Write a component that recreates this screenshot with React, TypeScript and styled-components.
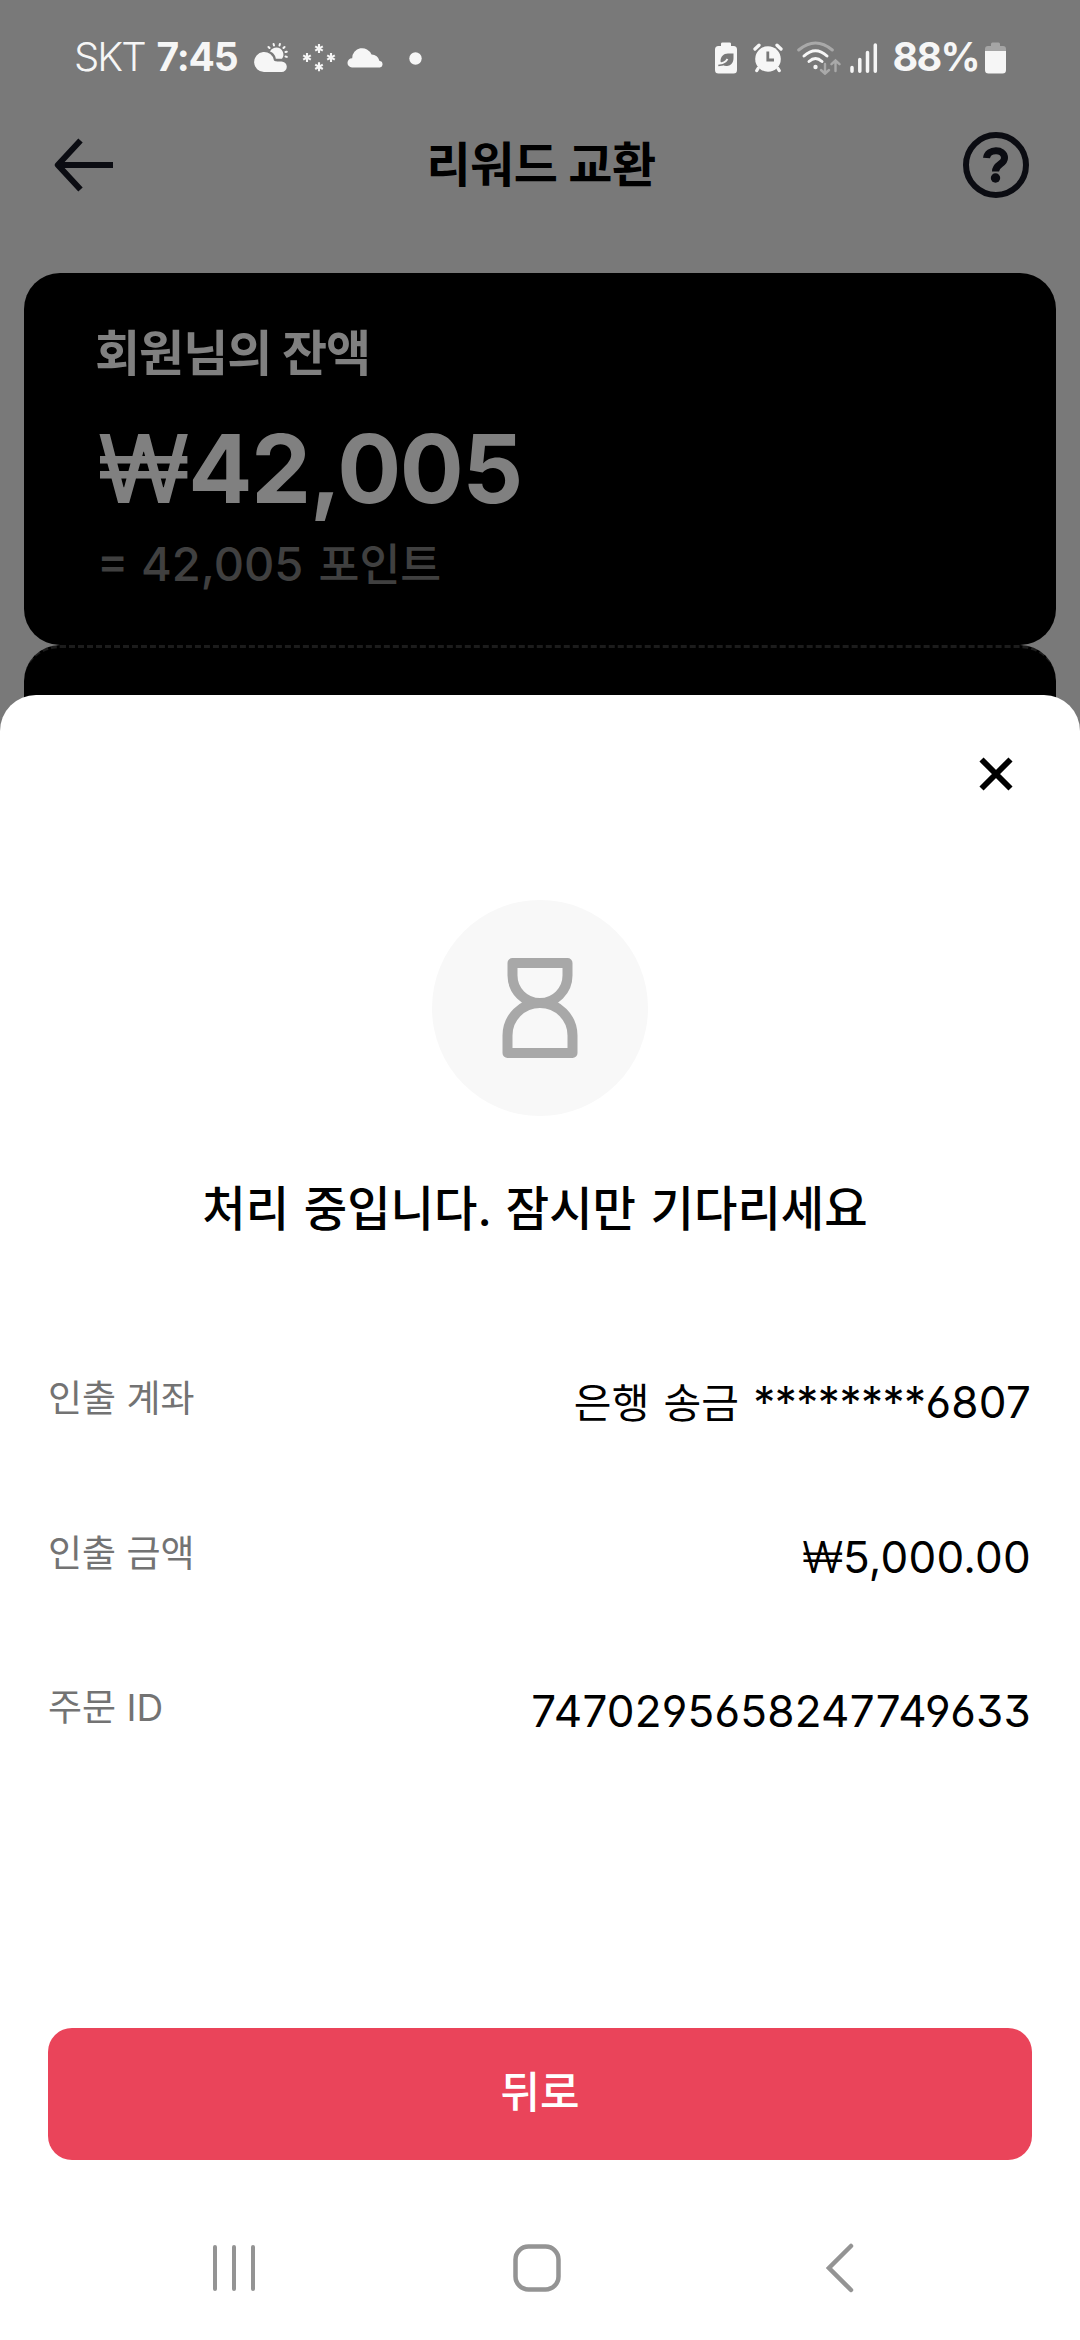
import React from "react";
import styled, { createGlobalStyle } from "styled-components";

const GlobalStyle = createGlobalStyle`
  * { box-sizing: border-box; }
  html, body { margin: 0; padding: 0; background: #797979; }
  body { width: 1080px; height: 2340px; overflow: hidden; font-family: Inter, "Noto Sans CJK KR", sans-serif; }
`;

const Screen = styled.div`
  width: 1080px;
  height: 2340px;
  display: flex;
  flex-direction: column;
  background: #797979;
  overflow: hidden;
`;

const StatusBar = styled.div`
  height: 116px;
  display: flex;
  align-items: center;
  justify-content: space-between;
  padding: 0 74px 0 74px;
  color: #f6f6f6;
`;

const StatusGroup = styled.div`
  display: flex;
  align-items: center;
`;

const StatusText = styled.span<{ $weight: number; $size: number; $gap: number; $spacing: number }>`
  font-size: ${(p) => p.$size}px;
  font-weight: ${(p) => p.$weight};
  letter-spacing: ${(p) => p.$spacing}px;
  margin-right: ${(p) => p.$gap}px;
  line-height: 56px;
  padding-bottom: 2px;
  white-space: nowrap;
`;

const Header = styled.header`
  height: 157px;
  padding: 0 51px 59px 54px;
  display: flex;
  align-items: center;
  justify-content: space-between;
`;

const HeaderTitle = styled.h1`
  margin: 0;
  padding-left: 5px;
  font-size: 48px;
  font-weight: 700;
  line-height: 70px;
  letter-spacing: -0.5px;
  color: #000;
`;

const IconButton = styled.button`
  border: 0;
  padding: 0;
  background: none;
  display: flex;
`;

const Wallet = styled.section`
  height: 422px;
  padding: 0 24px;
  display: flex;
  flex-direction: column;
`;

const BalanceCard = styled.div`
  flex: 0 0 372px;
  padding: 45px 71px 0;
  background: #000;
  border-radius: 36px;
`;

const CardLabel = styled.div`
  font-size: 49px;
  font-weight: 700;
  line-height: 72px;
  letter-spacing: -1px;
  color: #808080;
`;

const Balance = styled.div`
  font-size: 95px;
  font-weight: 650;
  line-height: 120px;
  margin-top: 19px;
  padding-left: 2px;
  letter-spacing: -1.4px;
  color: #808080;
`;

const BalanceWon = styled.span`
  font-weight: 550;
  letter-spacing: -2px;
`;

const Points = styled.div`
  display: flex;
  align-items: baseline;
  gap: 15px;
  padding-left: 2px;
  font-size: 47px;
  font-weight: 500;
  line-height: 70px;
  color: #404040;
`;

const PointsUnit = styled.span`
  font-size: 44.5px;
`;

const NextCard = styled.div`
  flex: 1 0 100px;
  background: #000;
  border-top: 3px dashed #1c1c1c;
  border-radius: 36px 36px 0 0;
`;

const Sheet = styled.main`
  flex: 1;
  display: flex;
  flex-direction: column;
  background: #fff;
  border-radius: 36px 36px 0 0;
`;

const SheetTop = styled.div`
  height: 205px;
  padding: 61px 66px 0;
  display: flex;
  justify-content: flex-end;
  align-items: flex-start;
`;

const StatusBadge = styled.div`
  width: 216px;
  height: 216px;
  align-self: center;
  border-radius: 50%;
  background: #f8f8f8;
  display: flex;
  align-items: center;
  justify-content: center;
`;

const Message = styled.h2`
  margin: 57px 0 0;
  padding-right: 10px;
  text-align: center;
  font-size: 47.2px;
  font-weight: 500;
  line-height: 72px;
  word-spacing: 2px;
  color: #000;
`;

const Details = styled.dl`
  margin: 127px 48px 0;
  display: flex;
  flex-direction: column;
  gap: 94.5px;
`;

const DetailRow = styled.div`
  height: 60px;
  display: flex;
  justify-content: space-between;
  align-items: flex-start;
`;

const Term = styled.dt`
  font-size: 37px;
  line-height: 50px;
  padding-top: 2px;
  color: #737373;
`;

const Value = styled.dd`
  margin: 0 1px 0 0;
  display: flex;
  align-items: baseline;
  font-size: 44px;
  line-height: 60px;
  letter-spacing: 0.2px;
  font-feature-settings: "cv03", "cv04", "cv09";
  color: #000;
`;

const BankName = styled.span`
  font-size: 41px;
  word-spacing: 2px;
  margin-right: 14px;
`;

const Mask = styled.span`
  letter-spacing: -0.5px;
`;

const Won = styled.span`
  font-weight: 300;
  letter-spacing: 0;
`;

const BackButton = styled.button`
  margin: auto 48px 0;
  height: 132px;
  padding: 0 0 4px;
  border: 0;
  border-radius: 24px;
  background: #ea445a;
  color: #fff;
  font: 500 43px/128px Inter, "Noto Sans CJK KR", sans-serif;
`;

const NavBar = styled.nav`
  height: 180px;
  padding: 35px 226px 0 210px;
  display: flex;
  justify-content: space-between;
  align-items: center;
`;

const HomeSlot = styled.span`
  display: flex;
  padding-right: 11px;
`;

const CloudSun = () => (
  <svg width="34" height="32" viewBox="0 0 34 32">
    <g stroke="#f6f6f6" strokeWidth="2" strokeLinecap="round">
      <path d="M15.500 6l-1-1M20 3.500l-.4-1.500M25.500 3.500l.4-1.500M29.500 6l1-1M31.500 10l1.300-.3M31.500 14.500l1.300.4" />
    </g>
    <path d="M16 9.500C17.500 6.500 20 5.500 22.500 5.500a7 7 0 0 1 5.500 11.200H21.800C21.500 13.500 19 10.500 16 9.500z" fill="#f6f6f6" />
    <path d="M10 30A10 10 0 1 1 20 18.500C21 19.300 22 19.400 23 19.400H27.500A5.300 5.300 0 0 1 27.500 30z" fill="#f6f6f6" />
  </svg>
);

const snowflakes = [[17, 5.5], [5, 14.5], [29, 14.5], [17, 23.8]];

const Snow = () => (
  <svg width="34" height="30" viewBox="0 0 34 30">
    {snowflakes.map(([x, y]) => (
      <path key={`${x}-${y}`} transform={`translate(${x} ${y})`} d="M0-4.500V4.500M-3.800-2.200L3.800 2.200M-3.800 2.200L3.800-2.200" stroke="#f6f6f6" strokeWidth="2.100" />
    ))}
  </svg>
);

const Cloud = () => (
  <svg width="38" height="22" viewBox="0 0 38 22">
    <path d="M5 20.500A4.600 4.600 0 0 1 5.200 11.300 10 10 0 0 1 24.500 7.500A8 8 0 0 1 32.500 14A3.300 3.300 0 0 1 33 20.500z" fill="#f6f6f6" />
  </svg>
);

const Dot = () => (
  <svg width="13" height="13" viewBox="0 0 13 13"><circle cx="6.500" cy="6.500" r="6.200" fill="#f6f6f6" /></svg>
);

const BatterySaver = () => (
  <svg width="22" height="32" viewBox="0 0 22 32">
    <path d="M6 4V1.800Q6 .500 7.500.500H14.500Q16 .500 16 1.800V4H18.500Q22 4 22 7.500V28Q22 31.500 18.500 31.500H3.500Q0 31.500 0 28V7.500Q0 4 3.500 4z" fill="#f6f6f6" />
    <path d="M18.500 11.500H13C8.500 11.500 5.500 14.500 5.500 19.500L7.500 23C9.500 24 11.500 24.200 13 23.800C16.800 23 18.500 20 18.500 16z" fill="#797979" />
    <path d="M12.500 17C11 19.500 8.500 21.300 4 21.800" fill="none" stroke="#f6f6f6" strokeWidth="1.900" />
    <path d="M3.300 23.600L8 22.800" stroke="#797979" strokeWidth="1.500" />
  </svg>
);

const Alarm = () => (
  <svg width="30" height="30" viewBox="0 0 30 30">
    <circle cx="15" cy="16" r="12.800" fill="#f6f6f6" />
    <path d="M2 6L6 2.200M28 6L24 2.200M5 25.500L3.800 27.500M25 25.500L26.200 27.500" stroke="#f6f6f6" strokeWidth="3.300" strokeLinecap="round" />
    <path d="M14.800 8.500V17H21" fill="none" stroke="#797979" strokeWidth="2.800" />
  </svg>
);

const Wifi = () => (
  <svg width="44" height="34" viewBox="0 0 44 34">
    <g fill="none" strokeLinecap="round" strokeWidth="3">
      <path d="M1.700 9Q18.500-5 35.300 9" stroke="#a9a9a9" />
      <path d="M7 15Q18.500 4.500 30 15M12 20.500Q18.500 14.500 25 20.500" stroke="#f6f6f6" />
      <path d="M28 23V32.500M24 29L28 32.700L32 29M38.500 30V19.500M34.500 23.200L38.500 19.500L42.500 23.200" stroke="#a9a9a9" strokeWidth="2.400" />
    </g>
    <circle cx="18.500" cy="26" r="2.200" fill="#f6f6f6" />
  </svg>
);

const Signal = () => (
  <svg width="28" height="31" viewBox="0 0 28 31">
    <path d="M2 24.500V28.300M9.800 16.500V28.300M17.500 9.500V28.300M25.300 2V28.300" stroke="#f6f6f6" strokeWidth="3.500" strokeLinecap="round" />
  </svg>
);

const Battery = () => (
  <svg width="21" height="32" viewBox="0 0 21 32">
    <path d="M0 9V7Q0 4 3 4H6V2Q6 .500 7.500.500H13.500Q15 .500 15 2V4H18Q21 4 21 7V9z" fill="#a5a5a5" />
    <path d="M0 9H21V28Q21 31.500 17.500 31.500H3.500Q0 31.500 0 28z" fill="#f6f6f6" />
  </svg>
);

const Spacer = styled.span<{ $w: number }>`
  flex: 0 0 ${(p) => p.$w}px;
`;

export default function App() {
  return (
    <Screen>
      <GlobalStyle />
      <StatusBar>
        <StatusGroup>
          <StatusText $weight={300} $size={40} $gap={12} $spacing={-2}>SKT</StatusText>
          <StatusText $weight={700} $size={39} $gap={16} $spacing={-1.2}>7:45</StatusText>
          <CloudSun /><Spacer $w={14} /><Snow /><Spacer $w={11} /><Cloud /><Spacer $w={24} /><Dot />
        </StatusGroup>
        <StatusGroup>
          <BatterySaver /><Spacer $w={16} /><Alarm /><Spacer $w={14} /><Wifi /><Spacer $w={9} /><Signal /><Spacer $w={15} />
          <StatusText $weight={700} $size={39.5} $gap={6} $spacing={-1.7}>88%</StatusText>
          <Battery />
        </StatusGroup>
      </StatusBar>
      <Header>
        <IconButton aria-label="뒤로 가기">
          <svg width="60" height="54" viewBox="0 0 60 54" fill="none" stroke="#0b0c12" strokeWidth="6">
            <path d="M26.500 2.500L3.800 27L26.500 51.500M4 27H59" strokeLinejoin="round" />
          </svg>
        </IconButton>
        <HeaderTitle>리워드 교환</HeaderTitle>
        <IconButton aria-label="도움말">
          <svg width="66" height="68" viewBox="0 0 66 68" fill="none" stroke="#0b0c12">
            <circle cx="33" cy="34" r="30" strokeWidth="6" />
            <path d="M23.500 27C24.500 17.500 41.500 17 41.500 27C41.500 33.500 32.500 33 32.500 40.500" strokeWidth="7" />
            <circle cx="32.500" cy="47" r="4.700" fill="#0b0c12" stroke="none" />
          </svg>
        </IconButton>
      </Header>
      <Wallet>
        <BalanceCard>
          <CardLabel>회원님의 잔액</CardLabel>
          <Balance><BalanceWon>₩</BalanceWon>42,005</Balance>
          <Points>
            <span>= 42,005</span>
            <PointsUnit>포인트</PointsUnit>
          </Points>
        </BalanceCard>
        <NextCard />
      </Wallet>
      <Sheet>
        <SheetTop>
          <IconButton aria-label="닫기">
            <svg width="36" height="36" viewBox="0 0 36 36" fill="none" stroke="#000" strokeWidth="5.800">
              <path d="M3.500 3.500L32.500 32.500M32.500 3.500L3.500 32.500" />
            </svg>
          </IconButton>
        </SheetTop>
        <StatusBadge>
          <svg width="76" height="100" viewBox="0 0 76 100" fill="none" stroke="#a8a8a8" strokeWidth="10" strokeLinejoin="round">
            <path d="M10.500 5H65.500V17.500A27.500 27.500 0 0 1 10.500 17.500z" />
            <path d="M5.500 95V77.500A32.500 32.500 0 0 1 70.500 77.500V95z" />
          </svg>
        </StatusBadge>
        <Message>처리 중입니다. 잠시만 기다리세요</Message>
        <Details>
          <DetailRow>
            <Term>인출 계좌</Term>
            <Value><BankName>은행 송금</BankName><Mask>********</Mask>6807</Value>
          </DetailRow>
          <DetailRow>
            <Term>인출 금액</Term>
            <Value><Won>₩</Won>5,000.00</Value>
          </DetailRow>
          <DetailRow>
            <Term>주문 ID</Term>
            <Value>7470295658247749633</Value>
          </DetailRow>
        </Details>
        <BackButton>뒤로</BackButton>
        <NavBar>
          <svg width="48" height="48" viewBox="0 0 48 48" stroke="#949494" strokeWidth="4" strokeLinecap="round">
            <path d="M5 3V45M24 3V45M43 3V45" />
          </svg>
          <HomeSlot>
            <svg width="48" height="48" viewBox="0 0 48 48" fill="none" stroke="#949494" strokeWidth="4.500">
              <rect x="2.500" y="2.500" width="43" height="43" rx="13" />
            </svg>
          </HomeSlot>
          <svg width="28" height="50" viewBox="0 0 28 50" fill="none" stroke="#949494" strokeWidth="4.500" strokeLinecap="round">
            <path d="M25 3L3 25L25 47" />
          </svg>
        </NavBar>
      </Sheet>
    </Screen>
  );
}
